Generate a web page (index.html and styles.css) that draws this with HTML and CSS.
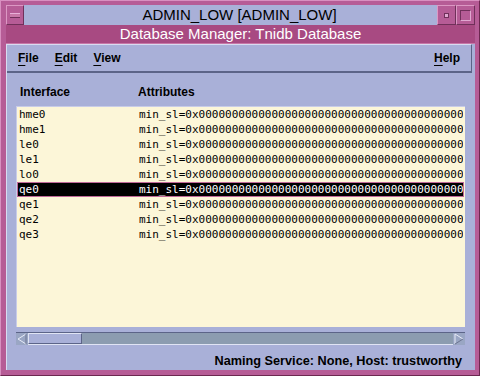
FILE: index.html
```html
<!DOCTYPE html>
<html>
<head>
<meta charset="utf-8">
<link rel="stylesheet" href="styles.css">
</head>
<body>
<div class="frame">
  <div class="titlebar">
    <div class="wbtn menubtn"><span class="bar"></span></div>
    <div class="title">ADMIN_LOW [ADMIN_LOW]</div>
    <div class="wbtn minbtn"><span class="dot"></span></div>
    <div class="wbtn maxbtn"><span class="sq"></span></div>
  </div>
  <div class="labelbar">Database Manager: Tnidb Database</div>
  <div class="client">
    <div class="menubar">
      <span class="menu"><u>F</u>ile</span>
      <span class="menu"><u>E</u>dit</span>
      <span class="menu"><u>V</u>iew</span>
      <span class="spacer"></span>
      <span class="menu"><u>H</u>elp</span>
    </div>
    <div class="content">
      <div class="header">
        <span class="col1">Interface</span>
        <span class="col2">Attributes</span>
      </div>
      <div class="list">
        <div class="row"><span class="col1">hme0</span><span class="col2">min_sl=0x0000000000000000000000000000000000000000000000000000000000000000</span></div>
        <div class="row"><span class="col1">hme1</span><span class="col2">min_sl=0x0000000000000000000000000000000000000000000000000000000000000000</span></div>
        <div class="row"><span class="col1">le0</span><span class="col2">min_sl=0x0000000000000000000000000000000000000000000000000000000000000000</span></div>
        <div class="row"><span class="col1">le1</span><span class="col2">min_sl=0x0000000000000000000000000000000000000000000000000000000000000000</span></div>
        <div class="row"><span class="col1">lo0</span><span class="col2">min_sl=0x0000000000000000000000000000000000000000000000000000000000000000</span></div>
        <div class="row selected"><span class="col1">qe0</span><span class="col2">min_sl=0x0000000000000000000000000000000000000000000000000000000000000000</span></div>
        <div class="row"><span class="col1">qe1</span><span class="col2">min_sl=0x0000000000000000000000000000000000000000000000000000000000000000</span></div>
        <div class="row"><span class="col1">qe2</span><span class="col2">min_sl=0x0000000000000000000000000000000000000000000000000000000000000000</span></div>
        <div class="row"><span class="col1">qe3</span><span class="col2">min_sl=0x0000000000000000000000000000000000000000000000000000000000000000</span></div>
      </div>
      <div class="hscroll">
        <div class="arrow left"><svg width="12" height="12" viewBox="0 0 12 12"><path d="M10 1 L2 6 L10 11" fill="none" stroke="#e8ecf8" stroke-width="1"/><path d="M10 1 L10 11" stroke="#6c7490" stroke-width="1"/></svg></div>
        <div class="thumb"></div>
        <div class="trough"></div>
        <div class="arrow right"><svg width="12" height="12" viewBox="0 0 12 12"><path d="M2 11 L2 1 L10 6" fill="none" stroke="#e8ecf8" stroke-width="1"/><path d="M10 6 L2 11" stroke="#6c7490" stroke-width="1"/></svg></div>
      </div>
      <div class="status">Naming Service: None, Host: trustworthy</div>
    </div>
  </div>
</div>
</body>
</html>
```
FILE: styles.css
```css
html, body {
  margin: 0;
  padding: 0;
}
body {
  width: 480px;
  height: 376px;
  overflow: hidden;
  background: #b65c96;
}
.frame {
  box-sizing: border-box;
  width: 480px;
  height: 376px;
  padding: 4px 4px 5px 5px;
  display: flex;
  flex-direction: column;
  border-top: 1px solid #d890c0;
  border-left: 1px solid #d890c0;
  border-right: 1px solid #6c2850;
  border-bottom: 1px solid #6c2850;
}
.titlebar {
  height: 20px;
  display: flex;
}
.wbtn {
  box-sizing: border-box;
  width: 19px;
  height: 20px;
  background: #b65c96;
  border-top: 1px solid #dc98c4;
  border-left: 1px solid #dc98c4;
  border-right: 1px solid #70305a;
  border-bottom: 1px solid #70305a;
  display: flex;
  align-items: center;
  justify-content: center;
}
.menubtn {
  width: 18px;
}
.menubtn .bar {
  width: 10px;
  height: 3px;
  background: #c878a8;
  border-top: 1px solid #e8b0d8;
  border-bottom: 1px solid #70305a;
}
.minbtn .dot {
  width: 3px;
  height: 3px;
  background: #e0a8d0;
  border: 1px solid #70305a;
}
.maxbtn .sq {
  width: 9px;
  height: 9px;
  border-top: 1px solid #70305a;
  border-left: 1px solid #70305a;
  border-right: 1px solid #e0a8d0;
  border-bottom: 1px solid #e0a8d0;
}
.title {
  flex: 1;
  background: #a9b0d8;
  color: #000;
  font-family: "Liberation Sans", Arial, sans-serif;
  font-size: 15px;
  line-height: 19px;
  text-align: center;
  padding-left: 18px;
}
.labelbar {
  height: 18px;
  background: #a84a82;
  color: #fff;
  font-family: "Liberation Sans", Arial, sans-serif;
  font-size: 15px;
  line-height: 18px;
  text-align: center;
  border-bottom: 1px solid #c878a8;
}
.client {
  flex: 1;
  background: #a9b0d8;
  display: flex;
  flex-direction: column;
  border-left: 1px solid #d8dcf0;
}
.menubar {
  height: 26px;
  display: flex;
  align-items: center;
  padding: 0 11px 0 11px;
  margin-right: 3px;
  border-top: 1px solid #d8dcf0;
  border-right: 1px solid #5c6488;
  border-bottom: 2px solid #5c6488;
  font-family: "Liberation Sans", Arial, sans-serif;
  font-weight: bold;
  font-size: 12px;
  color: #000;
}
.menu {
  margin-right: 16px;
}
.menu:last-child {
  margin-right: 0;
}
.menu u {
  text-decoration: underline;
  text-underline-offset: 3px;
  text-decoration-thickness: 1px;
}
.spacer {
  flex: 1;
}
.content {
  flex: 1;
  display: flex;
  flex-direction: column;
  padding: 0 10px 0 9px;
}
.header {
  height: 33px;
  display: flex;
  align-items: center;
  padding-top: 4px;
  box-sizing: border-box;
  font-family: "Liberation Sans", Arial, sans-serif;
  font-weight: bold;
  font-size: 12px;
  color: #000;
  padding-left: 4px;
}
.header .col1 {
  width: 118px;
}
.list {
  height: 221px;
  box-sizing: border-box;
  background: #fcf6d8;
  border-top: 1px solid #c8cce8;
  border-left: 1px solid #c8cce8;
  padding: 0 1px 0 0;
  overflow: hidden;
}
.row {
  height: 15px;
  box-sizing: border-box;
  display: flex;
  align-items: center;
  white-space: nowrap;
  overflow: hidden;
  font-family: "DejaVu Sans Mono", "Liberation Mono", monospace;
  font-size: 11px;
  color: #000;
  padding-left: 1px;
  border: 1px solid transparent;
}
.row .col1 {
  width: 120px;
  flex: none;
}
.row .col2 {
  flex: none;
}
.row.selected {
  background: #000;
  color: #fff;
  border-color: #c06898;
}
.hscroll {
  margin-top: 5px;
  height: 13px;
  display: flex;
  box-sizing: border-box;
  background: #8c9cb0;
  border-top: 1px solid #5c6488;
  border-bottom: 1px solid #e0e4f4;
}
.arrow {
  width: 12px;
  height: 12px;
  background: #9aa6c4;
  display: flex;
  align-items: center;
  justify-content: center;
}
.arrow svg {
  display: block;
}
.thumb {
  box-sizing: border-box;
  width: 54px;
  background: #a9b0d8;
  border-left: 1px solid #e0e4f4;
  border-top: 1px solid #e0e4f4;
  border-right: 1px solid #5c6488;
  border-bottom: 1px solid #5c6488;
}
.trough {
  flex: 1;
}
.status {
  flex: 1;
  display: flex;
  align-items: center;
  justify-content: flex-end;
  padding-right: 3px;
  padding-top: 6px;
  font-family: "Liberation Sans", Arial, sans-serif;
  font-weight: bold;
  font-size: 12.7px;
  color: #000;
}
```
